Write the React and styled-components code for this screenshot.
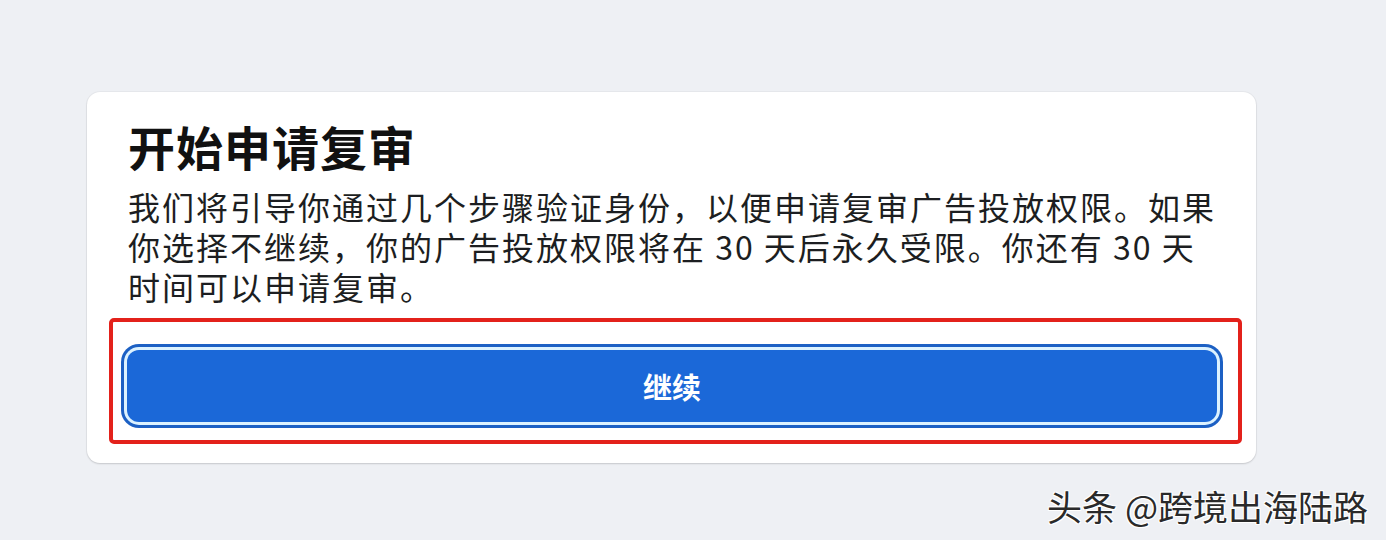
import React from "react";
import styled, { createGlobalStyle } from "styled-components";

const Global = createGlobalStyle`
  html, body { margin: 0; padding: 0; }
  body {
    background: #eef0f4;
    font-family: "Noto Sans CJK SC", "Noto Sans", sans-serif;
  }
`;

const Page = styled.div`
  position: relative;
  width: 1386px;
  height: 540px;
  box-sizing: border-box;
  padding: 92px 0 0 87px;
  overflow: hidden;
`;

const Card = styled.section`
  width: 1169px;
  box-sizing: border-box;
  background: #fff;
  border-radius: 13px;
  box-shadow: 0 1px 2px rgba(0, 0, 0, 0.14), 0 0 0 1px rgba(0, 0, 0, 0.03);
  padding: 24px 14px 19px 41px;
  display: flex;
  flex-direction: column;
`;

const Title = styled.h1`
  margin: 0;
  font-size: 47px;
  line-height: 60px;
  font-weight: 700;
  letter-spacing: 1px;
  color: #111;
`;

const Body = styled.p`
  margin: 10px 0 0;
  font-size: 32px;
  line-height: 40px;
  font-weight: 400;
  letter-spacing: 2px;
  color: #1c1e21;
`;

const Highlight = styled.div`
  margin: 12px 0 0 -19px;
  border: 4px solid #e3211b;
  border-radius: 5px;
  padding: 28px 21px 18px 14px;
`;

const Button = styled.button`
  display: block;
  width: 100%;
  height: 72px;
  border: none;
  border-radius: 12px;
  background: #1b68d8;
  box-shadow: 0 0 0 3px #dcf2ff, 0 0 0 6px #1c60c4;
  color: #fff;
  font-family: inherit;
  font-size: 29px;
  font-weight: 700;
  cursor: pointer;
`;

const Watermark = styled.div`
  position: absolute;
  right: 18px;
  bottom: 14px;
  font-size: 35px;
  line-height: 40px;
  color: #2a2a2a;
  text-shadow: 1px 1px 0 #fff, -1px -1px 0 #fff, 1px -1px 0 #fff, -1px 1px 0 #fff;
`;

export default function App() {
  return (
    <>
      <Global />
      <Page>
        <Card>
          <Title>开始申请复审</Title>
          <Body>
            我们将引导你通过几个步骤验证身份，以便申请复审广告投放权限。如果
            <br />
            你选择不继续，你的广告投放权限将在 30 天后永久受限。你还有 30 天
            <br />
            时间可以申请复审。
          </Body>
          <Highlight>
            <Button>继续</Button>
          </Highlight>
        </Card>
        <Watermark>头条 @跨境出海陆路</Watermark>
      </Page>
    </>
  );
}
